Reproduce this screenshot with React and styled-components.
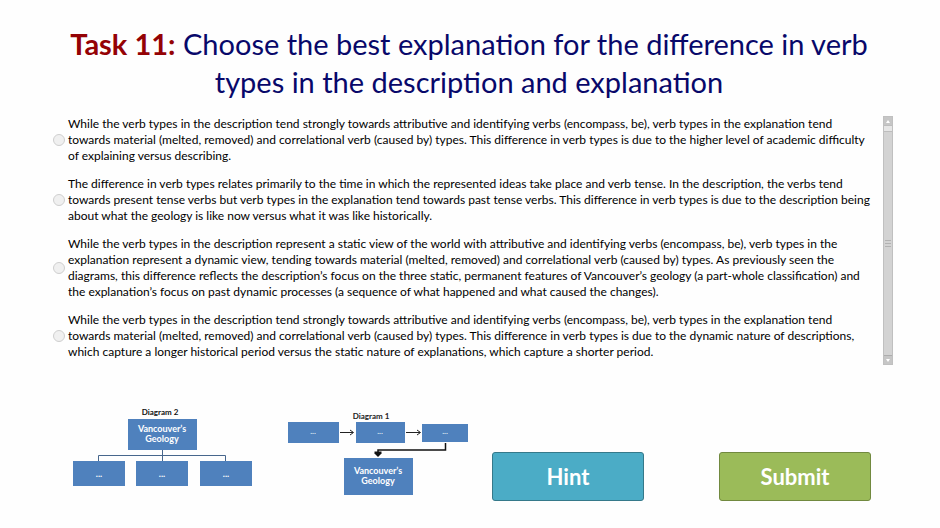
import React, { useRef } from "react";
import styled, { createGlobalStyle } from "styled-components";

const GlobalStyle = createGlobalStyle`
  body {
    margin: 0;
    background: #fefefe;
    color: #000;
    font-family: Lato, "Open Sans", sans-serif;
  }
`;

const Page = styled.main`
  box-sizing: border-box;
  padding: 25px 47px 24px 53px;
`;

const Title = styled.h1`
  margin: 0 0 15px;
  padding-right: 8px;
  color: #08086a;
  font-size: 29px;
  font-weight: 400;
  line-height: 38px;
  text-align: center;
`;

const TaskNumber = styled.strong`
  color: #940205;
  font-weight: 700;
`;

const AnswerPanel = styled.section`
  display: flex;
  align-items: stretch;
`;

const Answers = styled.fieldset`
  flex: 1;
  min-width: 0;
  margin: 0;
  padding: 0 0 5px;
  border: 0;
  display: flex;
  flex-direction: column;
  gap: 12px;
`;

const Answer = styled.label`
  display: flex;
  align-items: center;
  gap: 3px;
  font-size: 12px;
  line-height: 16px;
  white-space: pre-line;
  cursor: pointer;
`;

const Radio = styled.input`
  appearance: none;
  flex: none;
  width: 12px;
  height: 12px;
  margin: 0;
  border: 1px solid #cfcfcf;
  border-radius: 50%;
  background: #f0f0f0;

  &:checked {
    background: radial-gradient(#444 35%, #f0f0f0 40%);
  }
`;

const Scrollbar = styled.div`
  flex: none;
  box-sizing: border-box;
  width: 10px;
  display: flex;
  flex-direction: column;
  border: 1px solid #c0c0c0;
  background: #d3d3d3;
`;

const ScrollButton = styled.button`
  height: 8px;
  padding: 0;
  border: 0;
  background: #c6c6c6;
  display: flex;
  align-items: center;
  justify-content: center;
`;

const ScrollGap = styled.div`
  height: 5px;
  border: solid #bdbdbd;
  border-width: 1px 0;
  background: #e6e6e6;
`;

const ScrollThumb = styled.div`
  flex: 1;
  display: flex;
  flex-direction: column;
  align-items: center;
  justify-content: center;
  gap: 2px;
  border-bottom: 1px solid #adadad;
`;

const GripLine = styled.span`
  width: 6px;
  height: 1px;
  background: #b2b2b2;
`;

const Footer = styled.footer`
  display: flex;
  align-items: flex-end;
  justify-content: space-between;
  margin-top: 40px;
  padding: 0 22px 0 20px;
`;

const Diagrams = styled.div`
  display: flex;
  gap: 35px;
`;

const Drawing = styled.svg`
  display: block;
  font-family: Lato, "Open Sans", sans-serif;
  font-size: 8px;
  font-weight: 700;
  text-anchor: middle;
`;

const NodeText = styled.text`
  fill: #fff;
  font-size: 9px;
`;

const Actions = styled.div`
  display: flex;
  gap: 75px;
`;

const ActionButton = styled.button`
  box-sizing: border-box;
  width: 152px;
  height: 49px;
  padding: 0;
  border: 1px solid ${(p) => (p.$tone === "submit" ? "#71893f" : "#35798a")};
  border-radius: 3px;
  background: ${(p) => (p.$tone === "submit" ? "#9bbb59" : "#4bacc6")};
  color: #fff;
  font-family: inherit;
  font-size: 22px;
  font-weight: 700;
  line-height: 26px;
  cursor: pointer;
`;

const answers = [
  `While the verb types in the description tend strongly towards attributive and identifying verbs (encompass, be), verb types in the explanation tend
towards material (melted, removed) and correlational verb (caused by) types. This difference in verb types is due to the higher level of academic difficulty
of explaining versus describing.`,
  `The difference in verb types relates primarily to the time in which the represented ideas take place and verb tense. In the description, the verbs tend
towards present tense verbs but verb types in the explanation tend towards past tense verbs. This difference in verb types is due to the description being
about what the geology is like now versus what it was like historically.`,
  `While the verb types in the description represent a static view of the world with attributive and identifying verbs (encompass, be), verb types in the
explanation represent a dynamic view, tending towards material (melted, removed) and correlational verb (caused by) types. As previously seen the
diagrams, this difference reflects the description’s focus on the three static, permanent features of Vancouver’s geology (a part-whole classification) and
the explanation’s focus on past dynamic processes (a sequence of what happened and what caused the changes).`,
  `While the verb types in the description tend strongly towards attributive and identifying verbs (encompass, be), verb types in the explanation tend
towards material (melted, removed) and correlational verb (caused by) types. This difference in verb types is due to the dynamic nature of descriptions,
which capture a longer historical period versus the static nature of explanations, which capture a shorter period.`,
];

const BLUE = "#4f81bd";

function ClassificationDiagram() {
  return (
    <Drawing width="180" height="96" viewBox="0 0 180 96" role="img" aria-label="Diagram 2">
      <text x="87" y="10" fill="#111">Diagram 2</text>
      <path d="M89.5 45V56M25.5 56V50.5H152.5V56" fill="none" stroke="#47668c" />
      <rect x="55" y="14" width="69" height="31" fill={BLUE} />
      <NodeText x="89" y="27">Vancouver’s</NodeText>
      <NodeText x="89" y="37">Geology</NodeText>
      {[0, 63, 127].map((x) => (
        <g key={x}>
          <rect x={x} y="56" width="52" height="25" fill={BLUE} />
          <NodeText x={x + 26} y="72">...</NodeText>
        </g>
      ))}
    </Drawing>
  );
}

function SequenceDiagram() {
  return (
    <Drawing width="181" height="96" viewBox="0 0 181 96" role="img" aria-label="Diagram 1">
      <text x="83" y="14" fill="#222">Diagram 1</text>
      <rect x="0" y="17" width="51" height="21" fill={BLUE} />
      <rect x="68" y="17" width="49" height="21" fill={BLUE} />
      <rect x="134" y="19" width="46" height="18" fill={BLUE} />
      {[25, 92, 157].map((x) => (
        <text key={x} x={x} y="29" fill="#dce6f2">...</text>
      ))}
      <path
        d="M52 27.5H65M62 25l3.5 2.5L62 30M118 27.5H132M129 25l3.5 2.5L129 30"
        fill="none"
        stroke="#222"
      />
      <path d="M157.5 38V45H90V48" fill="none" stroke="#111" strokeWidth="1.5" />
      <path d="M86.5 46.5H93.5V48.5L90 52L86.5 48.5Z" fill="#111" />
      <rect x="56" y="53" width="69" height="37" fill={BLUE} />
      <NodeText x="90" y="69">Vancouver’s</NodeText>
      <NodeText x="90" y="79">Geology</NodeText>
    </Drawing>
  );
}

export default function App() {
  const answersRef = useRef(null);
  const scroll = (top) => answersRef.current.scrollBy({ top });

  return (
    <>
      <GlobalStyle />
      <Page>
        <Title>
          <TaskNumber>Task 11:</TaskNumber> Choose the best explanation for the difference in verb
          <br />
          types in the description and explanation
        </Title>
        <AnswerPanel>
          <Answers ref={answersRef}>
            {answers.map((text, i) => (
              <Answer key={i}>
                <Radio type="radio" name="answer" value={i} />
                <span>{text}</span>
              </Answer>
            ))}
          </Answers>
          <Scrollbar>
            <ScrollButton type="button" aria-label="Scroll up" onClick={() => scroll(-16)}>
              <svg width="4" height="3" viewBox="0 0 4 3">
                <path d="M2 0L4 3H0Z" fill="#fff" />
              </svg>
            </ScrollButton>
            <ScrollGap />
            <ScrollThumb>
              <GripLine />
              <GripLine />
              <GripLine />
            </ScrollThumb>
            <ScrollButton type="button" aria-label="Scroll down" onClick={() => scroll(16)}>
              <svg width="4" height="3" viewBox="0 0 4 3">
                <path d="M0 0H4L2 3Z" fill="#fff" />
              </svg>
            </ScrollButton>
          </Scrollbar>
        </AnswerPanel>
        <Footer>
          <Diagrams>
            <ClassificationDiagram />
            <SequenceDiagram />
          </Diagrams>
          <Actions>
            <ActionButton type="button" $tone="hint">Hint</ActionButton>
            <ActionButton type="submit" $tone="submit">Submit</ActionButton>
          </Actions>
        </Footer>
      </Page>
    </>
  );
}
